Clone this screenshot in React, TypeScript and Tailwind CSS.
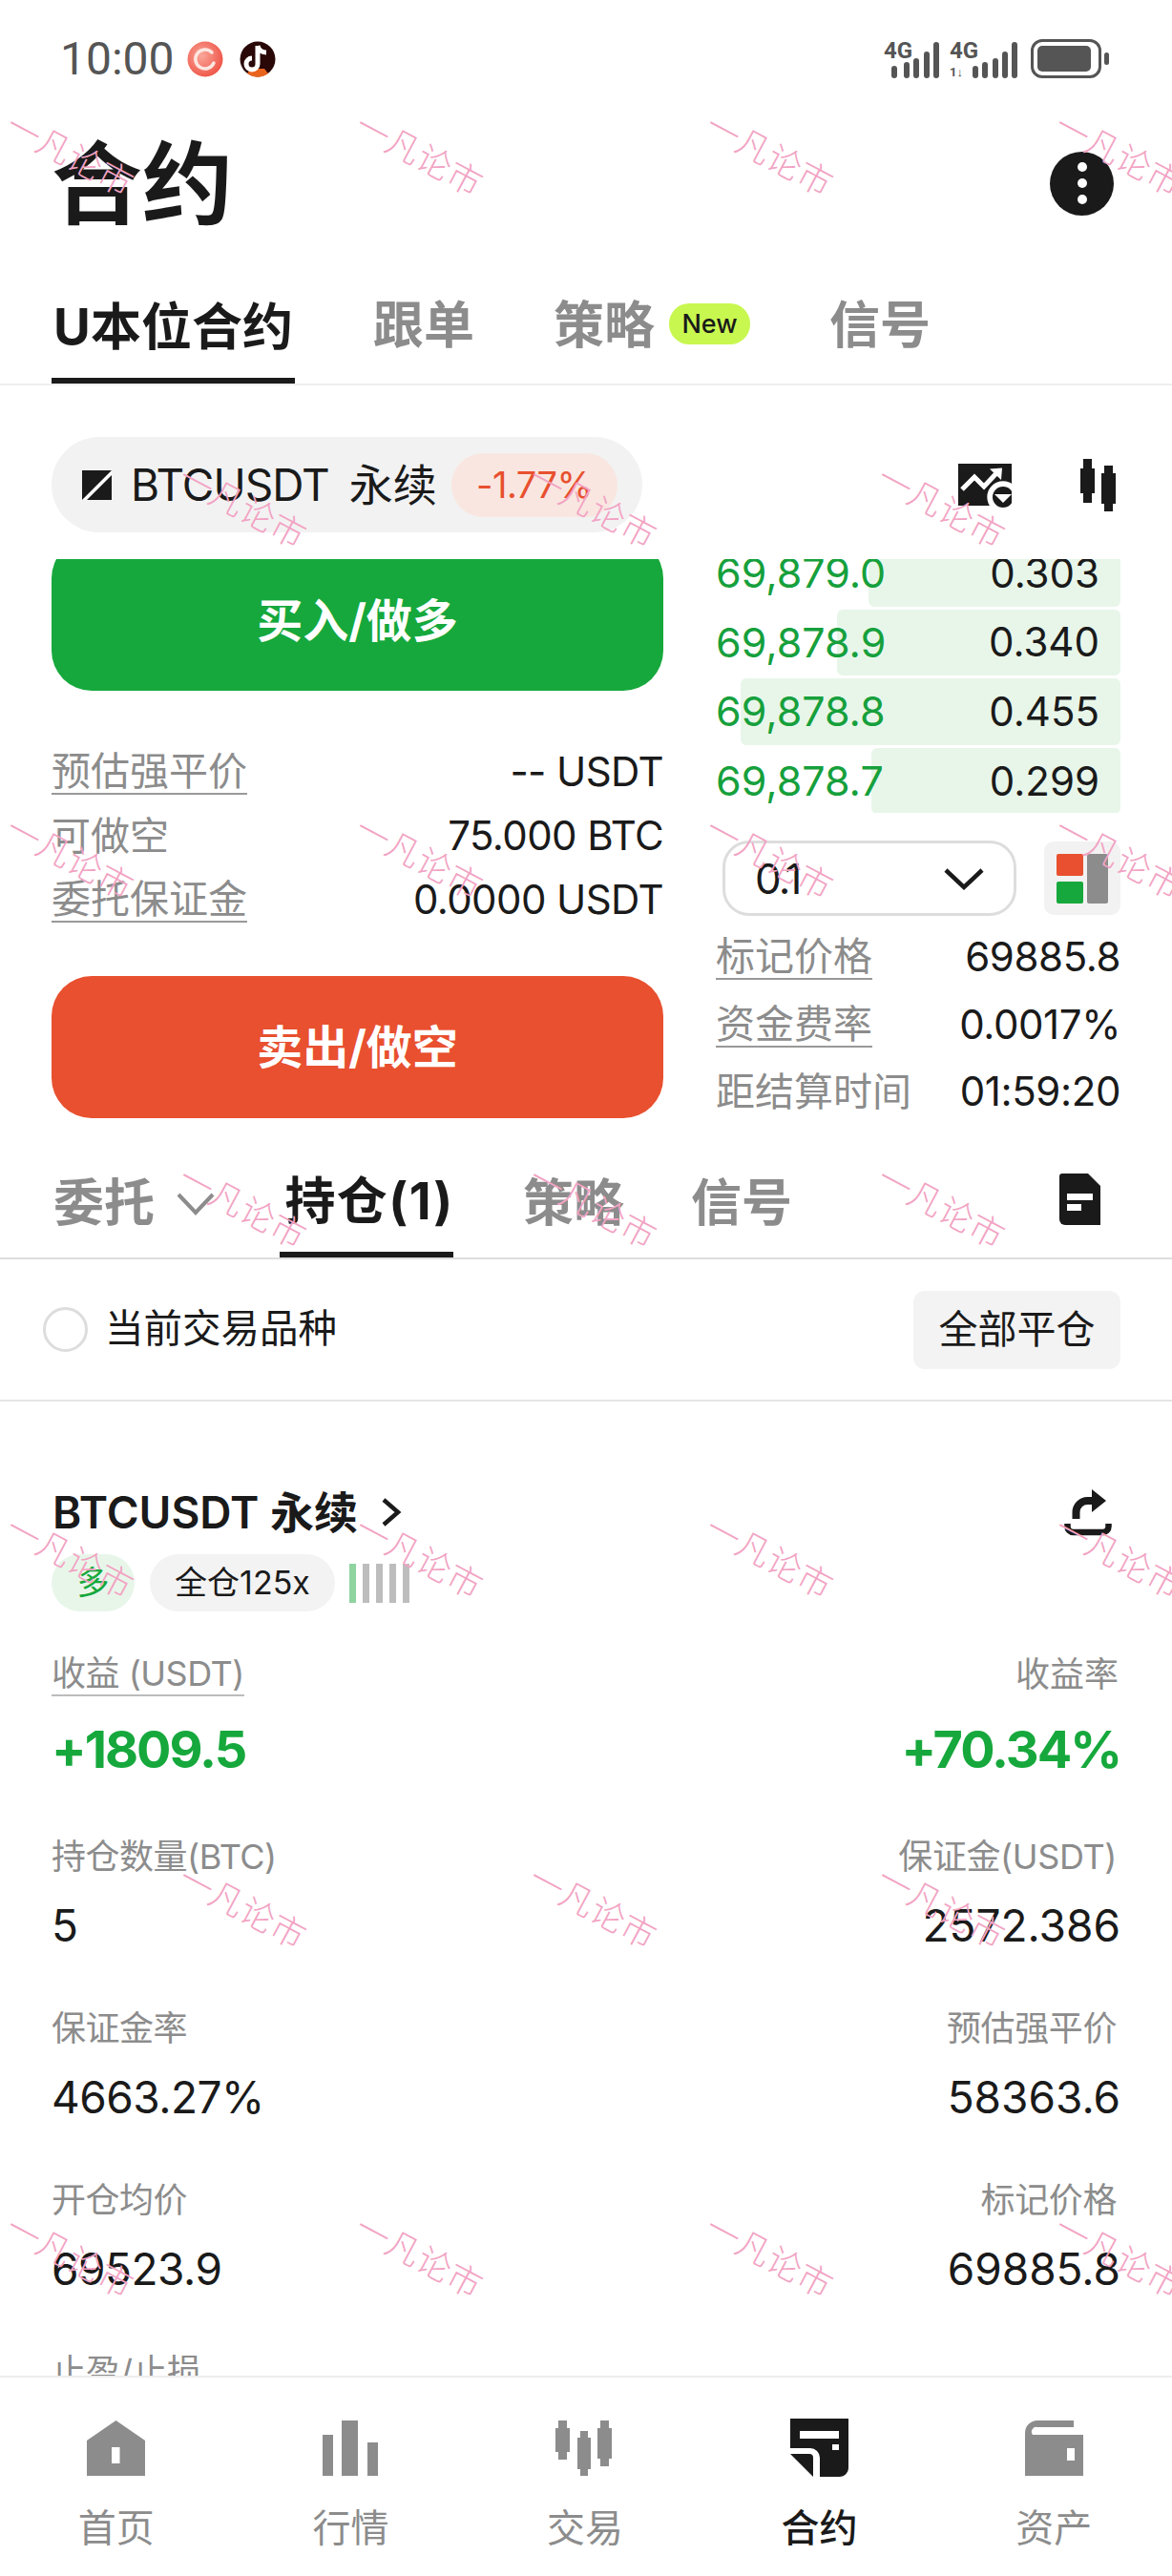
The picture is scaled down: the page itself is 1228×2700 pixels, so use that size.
import React from "react";

const wmRows: [number, number[]][] = [
  [162, [73, 439, 806, 1172]],
  [531, [254, 621, 986]],
  [899, [73, 439, 806, 1172]],
  [1265, [254, 621, 986]],
  [1632, [73, 439, 806, 1172]],
  [1999, [254, 621, 986]],
  [2365, [73, 439, 806, 1172]],
];

function Watermarks() {
  return (
    <div className="absolute inset-0 pointer-events-none overflow-hidden">
      {wmRows.flatMap(([y, xs]) =>
        xs.map((x) => (
          <span
            key={`${x}-${y}`}
            className="absolute text-[36px] leading-none font-light text-[#f2a3c3] whitespace-nowrap rotate-[28deg] -translate-x-1/2 -translate-y-1/2"
            style={{ left: x, top: y }}
          >
            一凡论市
          </span>
        ))
      )}
    </div>
  );
}

function Signal({ second }: { second?: boolean }) {
  const bars = second
    ? [[24, 27], [34, 23], [45, 19], [55, 12], [65, 2]]
    : [[8, 27], [21, 23], [31, 19], [42, 12], [52, 2]];
  return (
    <svg width={second ? 71 : 58} height="40" viewBox={`0 0 ${second ? 71 : 58} 40`} className="block">
      <text x="0" y="19" fontSize="24" fontWeight="700" fill="#555" fontFamily="Roboto">4G</text>
      {second && <text x="0" y="38" fontSize="13" fontWeight="700" fill="#555" fontFamily="Roboto">1↓</text>}
      {bars.map(([x, y]) => (
        <rect key={x} x={x} y={y} width="6" height={40 - y} rx="3" fill="#555" />
      ))}
    </svg>
  );
}

function StatusBar() {
  return (
    <div className="h-[124px] flex items-start justify-between pl-[63px] pr-[66px] pt-[42px] shrink-0">
      <div className="flex items-center">
        <span className="font-[Roboto] text-[48px] leading-[40px] text-[#555]">10:00</span>
        <svg width="38" height="38" viewBox="0 0 38 38" className="ml-[13px]">
          <defs>
            <radialGradient id="redIcon" cx="0.4" cy="0.4" r="0.7">
              <stop offset="0" stopColor="#f9a79a" />
              <stop offset="1" stopColor="#ee4d3f" />
            </radialGradient>
          </defs>
          <circle cx="19" cy="19" r="18.5" fill="url(#redIcon)" />
          <path d="M26 12a10 10 0 1 0 2 11" fill="none" stroke="#fde6e0" strokeWidth="3.5" strokeLinecap="round" />
        </svg>
        <svg width="38" height="38" viewBox="0 0 38 38" className="ml-[17px]">
          <circle cx="19" cy="19" r="18.5" fill="#2a0808" />
          <path d="M8 34a18.5 18.5 0 0 0 22 0l-4-5H12z" fill="#e8641e" />
          <path d="M19 5v19a6 6 0 1 1-6-6M19 5c1 4 4 7 9 7" fill="none" stroke="#fff" strokeWidth="5" />
        </svg>
      </div>
      <div className="flex items-center -mt-[1px]">
        <Signal />
        <div className="ml-[11px]">
          <Signal second />
        </div>
        <div className="flex items-center gap-[3px] ml-[14px]">
          <div className="w-[74px] h-[41px] rounded-[12px] border-[3px] border-[#555] p-[4px]">
            <div className="w-[56px] h-full bg-[#555] rounded-[5px]" />
          </div>
          <div className="w-[5px] h-[13px] rounded-full bg-[#555]" />
        </div>
      </div>
    </div>
  );
}

function Header() {
  return (
    <div className="h-[136px] shrink-0 flex items-center justify-between pl-[54px] pr-[61px]">
      <span className="text-[95px] leading-none font-bold text-[#1a1a1a] pt-[2px]">合约</span>
      <div className="w-[67px] h-[67px] rounded-full bg-[#1a1a1a] flex flex-col items-center justify-center gap-[7px]">
        <span className="w-[10px] h-[10px] rounded-full bg-white" />
        <span className="w-[10px] h-[10px] rounded-full bg-white" />
        <span className="w-[10px] h-[10px] rounded-full bg-white" />
      </div>
    </div>
  );
}

function TopTabs() {
  return (
    <div className="h-[144px] shrink-0 border-b-[2px] border-[#eee] flex items-end pl-[54px]">
      <div className="h-[142px] w-[255px] border-b-[6px] border-[#1a1a1a] flex items-center justify-center pt-[30px]">
        <span className="text-[53px] leading-none font-bold text-[#1a1a1a] whitespace-nowrap">U本位合约</span>
      </div>
      <div className="h-[142px] flex items-center pt-[20px] pl-[82px]">
        <span className="text-[53px] leading-none font-bold text-[#8c8c8c]">跟单</span>
      </div>
      <div className="h-[142px] flex items-center pt-[20px] pl-[83px]">
        <span className="text-[53px] leading-none font-bold text-[#8c8c8c]">策略</span>
        <span className="ml-[15px] w-[85px] h-[43px] rounded-[21px] bg-[#c8f750] text-[#1a1a1a] text-[27px] font-medium flex items-center justify-center leading-none -mt-[3px]">New</span>
      </div>
      <div className="h-[142px] flex items-center pt-[20px] pl-[83px]">
        <span className="text-[53px] leading-none font-bold text-[#8c8c8c]">信号</span>
      </div>
    </div>
  );
}

function ChartIcon() {
  return (
    <svg width="56" height="46" viewBox="0 0 56 46">
      <rect x="0" y="0" width="56" height="44" fill="#1a1a1a" />
      <path d="M4 27 17 14 27 24 41 9" fill="none" stroke="#fff" strokeWidth="5" />
      <path d="M33 5.5 46 4.5 45 17z" fill="#fff" />
      <circle cx="47" cy="35" r="16.7" fill="#fff" />
      <circle cx="47" cy="35" r="11" fill="#1a1a1a" />
      <path d="M38 32h18l-9 9z" fill="#fff" />
    </svg>
  );
}

function CandleIcon() {
  return (
    <svg width="37" height="55" viewBox="0 0 37 55">
      <path d="M3 0h9v10h3v26h-3v10H3V36H0V10h3z" fill="#1a1a1a" />
      <path d="M25 7h9v8h3v32h-3v8h-9v-8h-3V15h3z" fill="#1a1a1a" />
    </svg>
  );
}

function PairRow() {
  return (
    <div className="h-[182px] shrink-0 pl-[54px] pr-[59px] pt-[54px] flex items-start justify-between">
      <div className="w-[619px] h-[100px] rounded-full bg-[#f2f2f2] flex items-center pl-[32px]">
        <svg width="31" height="31" viewBox="0 0 31 31">
          <rect width="31" height="31" fill="#1a1a1a" />
          <path d="M31 0 0 31h5L31 5z" fill="#fff" />
        </svg>
        <span className="ml-[20px] text-[46px] leading-none text-[#1a1a1a] tracking-[-1px]">BTCUSDT</span>
        <span className="ml-[21px] text-[46px] leading-none text-[#1a1a1a]">永续</span>
        <span className="ml-[15px] w-[174px] h-[67px] rounded-full bg-[#f9e6e0] text-[#e8502f] text-[38px] tracking-[-0.5px] flex items-center justify-center">-1.77%</span>
      </div>
      <div className="flex items-center mt-[23px]">
        <ChartIcon />
        <div className="ml-[72px]">
          <CandleIcon />
        </div>
      </div>
    </div>
  );
}

function InfoRow({ label, value, underline }: { label: string; value: string; underline?: boolean }) {
  return (
    <div className="h-[67px] flex items-center justify-between">
      <span className={`text-[41px] leading-[46px] text-[#8c8c8c] ${underline ? "border-b-[2px] border-[#999]" : ""}`}>{label}</span>
      <span className="text-[42px] leading-[46px] text-[#1a1a1a] tracking-[-0.6px]">{value}</span>
    </div>
  );
}

function LeftPanel() {
  return (
    <div className="w-[641px] shrink-0">
      <div className="h-[138px] overflow-hidden">
        <div className="h-[160px] -mt-[22px] pt-[14px] rounded-[42px] bg-[#16a83c] text-white text-[48px] font-bold flex items-center justify-center leading-none">买入/做多</div>
      </div>
      <div className="mt-[51px]">
        <InfoRow label="预估强平价" value="-- USDT" underline />
        <InfoRow label="可做空" value="75.000 BTC" />
        <InfoRow label="委托保证金" value="0.0000 USDT" underline />
      </div>
      <div className="mt-[47px] h-[149px] rounded-[42px] bg-[#e8502f] text-white text-[48px] font-bold flex items-center justify-center leading-none">卖出/做空</div>
    </div>
  );
}

const book: [string, string, number][] = [
  ["69,879.0", "0.303", 264],
  ["69,878.9", "0.340", 297],
  ["69,878.8", "0.455", 398],
  ["69,878.7", "0.299", 261],
];

function RightPanel() {
  return (
    <div className="w-[424px] shrink-0 ml-[55px]">
      <div className="h-[266px] overflow-hidden">
        <div className="-mt-[20px] flex flex-col gap-[3px]">
          {book.map(([p, q, w]) => (
            <div key={p} className="h-[69.6px] relative flex items-center justify-between pr-[22px]">
              <div className="absolute right-0 top-0 bottom-0 bg-[#e8f6ea] rounded-[6px]" style={{ width: w }} />
              <span className="relative text-[43px] leading-none text-[#16a03c]">{p}</span>
              <span className="relative text-[42px] leading-none text-[#1a1a1a]">{q}</span>
            </div>
          ))}
        </div>
      </div>
      <div className="mt-[29px] flex items-center justify-between">
        <div className="ml-[7px] w-[308px] h-[79px] rounded-[28px] border-[3px] border-[#ddd] flex items-center justify-between pl-[31px] pr-[30px]">
          <span className="text-[44px] leading-none text-[#1a1a1a] tracking-[-2px]">0.1</span>
          <svg width="44" height="26" viewBox="0 0 44 26"><path d="M3 4 22 22 41 4" fill="none" stroke="#1a1a1a" strokeWidth="4.5" /></svg>
        </div>
        <div className="w-[80px] h-[77px] rounded-[10px] bg-[#f2f2f2] flex justify-center items-center gap-[4px]">
          <div className="flex flex-col gap-[6px]">
            <div className="w-[28px] h-[23px] bg-[#e8502f] rounded-[2px]" />
            <div className="w-[28px] h-[23px] bg-[#16a83c] rounded-[2px]" />
          </div>
          <div className="w-[22px] h-[52px] bg-[#8c8c8c] rounded-[2px]" />
        </div>
      </div>
      <div className="mt-[8px]">
        {[
          ["标记价格", "69885.8", true],
          ["资金费率", "0.0017%", true],
          ["距结算时间", "01:59:20", false],
        ].map(([l, v, u]) => (
          <div key={l as string} className="h-[70.5px] flex items-center justify-between">
            <span className={`text-[41px] leading-[46px] text-[#8c8c8c] ${u ? "border-b-[2px] border-[#999]" : ""}`}>{l}</span>
            <span className="text-[42px] leading-[46px] text-[#1a1a1a] tracking-[-0.4px]">{v}</span>
          </div>
        ))}
      </div>
    </div>
  );
}

function Trading() {
  return (
    <div className="h-[585px] shrink-0 pl-[54px] flex items-start">
      <LeftPanel />
      <RightPanel />
    </div>
  );
}

function SubTabs() {
  return (
    <div className="h-[149px] shrink-0 border-b-[2px] border-[#ddd] flex items-end pl-[56px] pr-[75px]">
      <div className="h-[147px] flex items-center pt-[34px]">
        <span className="text-[53px] leading-none font-bold text-[#8c8c8c]">委托</span>
        <svg width="42" height="26" viewBox="0 0 42 26" className="ml-[22px]"><path d="M3 3 21 22 39 3" fill="none" stroke="#8c8c8c" strokeWidth="4" /></svg>
      </div>
      <div className="h-[147px] w-[182px] ml-[67px] border-b-[6px] border-[#1a1a1a] flex items-center justify-center pt-[36px]">
        <span className="text-[53px] leading-none font-bold text-[#1a1a1a] whitespace-nowrap pl-[6px] tracking-[1.5px]">持仓(1)</span>
      </div>
      <div className="h-[147px] flex items-center pt-[34px] ml-[73px]">
        <span className="text-[53px] leading-none font-bold text-[#8c8c8c]">策略</span>
      </div>
      <div className="h-[147px] flex items-center pt-[34px] ml-[70px]">
        <span className="text-[53px] leading-none font-bold text-[#8c8c8c]">信号</span>
      </div>
      <div className="h-[147px] flex items-center pt-[24px] ml-auto">
        <svg width="43" height="54" viewBox="0 0 43 54">
          <path d="M3 0h27l13 13v41H6a6 6 0 0 1-6-6V3a3 3 0 0 1 3-3z" fill="#1a1a1a" />
          <rect x="8" y="21" width="27" height="7" fill="#fff" />
          <rect x="8" y="32" width="15" height="7" fill="#fff" />
        </svg>
      </div>
    </div>
  );
}

function FilterRow() {
  return (
    <div className="h-[149px] shrink-0 border-b-[2px] border-[#e5e5e5] flex items-center pl-[45px] pr-[54px]">
      <div className="w-[47px] h-[47px] rounded-full border-[3px] border-[#ddd]" />
      <span className="ml-[18px] text-[40.5px] leading-none text-[#1a1a1a]">当前交易品种</span>
      <div className="ml-auto w-[217px] h-[82px] rounded-[12px] bg-[#f3f3f3] flex items-center justify-center text-[41px] leading-none text-[#1a1a1a]">全部平仓</div>
    </div>
  );
}

function Stat({ left, right, leftV, rightV }: { left: string; right: string; leftV: string; rightV: string }) {
  return (
    <div className="h-[180px] shrink-0">
      <div className="h-[50px] flex items-center justify-between">
        <span className="text-[36px] leading-none text-[#8c8c8c] tracking-[-0.5px]">{left}</span>
        <span className="text-[36px] leading-none text-[#8c8c8c] tracking-[-0.4px] pr-[4px]">{right}</span>
      </div>
      <div className="mt-[17px] h-[60px] flex items-center justify-between">
        <span className="text-[46px] leading-none text-[#1a1a1a] tracking-[-0.5px]">{leftV}</span>
        <span className="text-[46px] leading-none text-[#1a1a1a]">{rightV}</span>
      </div>
    </div>
  );
}

function Position() {
  return (
    <div className="flex-1 min-h-0 overflow-hidden pl-[54px] pr-[54px]">
      <div className="mt-[88px] h-[56px] flex items-center">
        <span className="pl-[1px] text-[46px] leading-none font-semibold text-[#1a1a1a] whitespace-nowrap">BTCUSDT 永续</span>
        <svg width="22" height="32" viewBox="0 0 22 32" className="ml-[24px]"><path d="M3 3 18 16 3 29" fill="none" stroke="#1a1a1a" strokeWidth="4.5" /></svg>
        <svg width="50" height="50" viewBox="0 0 50 50" className="ml-auto mr-[9px]">
          <path d="M12.5 32V25A12 12 0 0 1 24.5 13H31" fill="none" stroke="#1a1a1a" strokeWidth="8" />
          <path d="M29 1 44 13 29 25z" fill="#1a1a1a" />
          <path d="M3.5 37v3a6 6 0 0 0 6 6h31a6 6 0 0 0 6-6v-3" fill="none" stroke="#1a1a1a" strokeWidth="6.5" />
        </svg>
      </div>
      <div className="mt-[16px] h-[60px] flex items-center">
        <span className="w-[87px] h-[60px] rounded-full bg-[#e8f6ea] text-[#16a83c] text-[34px] flex items-center justify-center leading-none">多</span>
        <span className="ml-[16px] w-[194px] h-[60px] rounded-full bg-[#f3f3f3] text-[#1a1a1a] text-[34px] flex items-center justify-center leading-none">全仓125x</span>
        <div className="ml-[15px] flex gap-[7px] h-[41px]">
          <div className="w-[7px] bg-[#8fd49f]" />
          <div className="w-[7px] bg-[#bdbdbd]" />
          <div className="w-[7px] bg-[#bdbdbd]" />
          <div className="w-[7px] bg-[#bdbdbd]" />
          <div className="w-[7px] bg-[#bdbdbd]" />
        </div>
      </div>
      <div className="mt-[41px] h-[191px]">
        <div className="h-[50px] flex items-center justify-between">
          <span className="text-[36px] leading-[44px] text-[#8c8c8c] tracking-[-0.5px] border-b-[2px] border-[#bbb]">收益 (USDT)</span>
          <span className="text-[36px] leading-none text-[#8c8c8c] pr-[2px]">收益率</span>
        </div>
        <div className="mt-[20px] h-[68px] flex items-center justify-between">
          <span className="text-[54px] leading-none font-bold text-[#16a83c] tracking-[-2px]">+1809.5</span>
          <span className="text-[54px] leading-none font-bold text-[#16a83c] tracking-[-2px]">+70.34%</span>
        </div>
      </div>
      <Stat left="持仓数量(BTC)" right="保证金(USDT)" leftV="5" rightV="2572.386" />
      <Stat left="保证金率" right="预估强平价" leftV="4663.27%" rightV="58363.6" />
      <Stat left="开仓均价" right="标记价格" leftV="69523.9" rightV="69885.8" />
      <div className="h-[50px] flex items-center">
        <span className="text-[36px] leading-none text-[#8c8c8c]">止盈/止损</span>
      </div>
    </div>
  );
}

const G = "#8c8c8c";
const K = "#1a1a1a";

const navIcons = [
  <svg key="h" width="61" height="58" viewBox="0 0 61 58">
    <path d="M30.5 0 61 21v37H0V21z" fill={G} />
    <rect x="26" y="28" width="8.5" height="17" fill="#fff" />
  </svg>,
  <svg key="b" width="59" height="58" viewBox="0 0 59 58">
    <rect x="0" y="15" width="11" height="43" fill={G} />
    <rect x="20" y="0" width="17" height="58" fill={G} />
    <rect x="47" y="23" width="11" height="35" fill={G} />
  </svg>,
  <svg key="c" width="62" height="58" viewBox="0 0 62 58">
    <path d="M3 0h9v8h3v25h-3v8H3v-8H0V8h3z" fill={G} />
    <path d="M26 11h8v7h3v33h-3v7h-8v-7h-3V18h3z" fill={G} />
    <path d="M47 0h9v8h3v32h-3v8h-9v-8h-3V8h3z" fill={G} />
  </svg>,
  <svg key="k" width="61" height="61" viewBox="0 0 61 61">
    <path d="M0 0h61v52a9 9 0 0 1-9 9H31V41a10 10 0 0 0-10-10H0z" fill={K} />
    <path d="M0 37h20a4 4 0 0 1 4 4v20z" fill={K} />
    <rect x="10" y="13" width="41" height="8" fill="#fff" />
    <rect x="44" y="27" width="7" height="6" fill="#fff" />
  </svg>,
  <svg key="w" width="61" height="58" viewBox="0 0 61 58">
    <path d="M0 58V13A13 13 0 0 1 13 0h38v7H13a5 5 0 0 0-5 8h53v43z" fill={G} />
    <rect x="44" y="29" width="8" height="13" fill="#fff" />
  </svg>,
];

function BottomNav() {
  const labels = ["首页", "行情", "交易", "合约", "资产"];
  return (
    <div className="h-[210px] shrink-0 bg-white border-t-[2px] border-[#eee] grid grid-cols-5 relative">
      {labels.map((l, i) => (
        <div key={l} className="flex flex-col items-center pt-[43px] -translate-x-[1px]">
          <div className="h-[61px] flex items-center justify-center">{navIcons[i]}</div>
          <span className={`mt-[34px] text-[40px] leading-none ${i === 3 ? "text-[#1a1a1a] font-medium" : "text-[#8c8c8c]"}`}>{l}</span>
        </div>
      ))}
    </div>
  );
}

export default function App() {
  return (
    <div className="relative w-[1228px] h-[2700px] overflow-hidden bg-white flex flex-col font-[Inter,'Noto_Sans_CJK_SC',sans-serif]">
      <StatusBar />
      <Header />
      <TopTabs />
      <PairRow />
      <Trading />
      <SubTabs />
      <FilterRow />
      <Position />
      <BottomNav />
      <Watermarks />
    </div>
  );
}
